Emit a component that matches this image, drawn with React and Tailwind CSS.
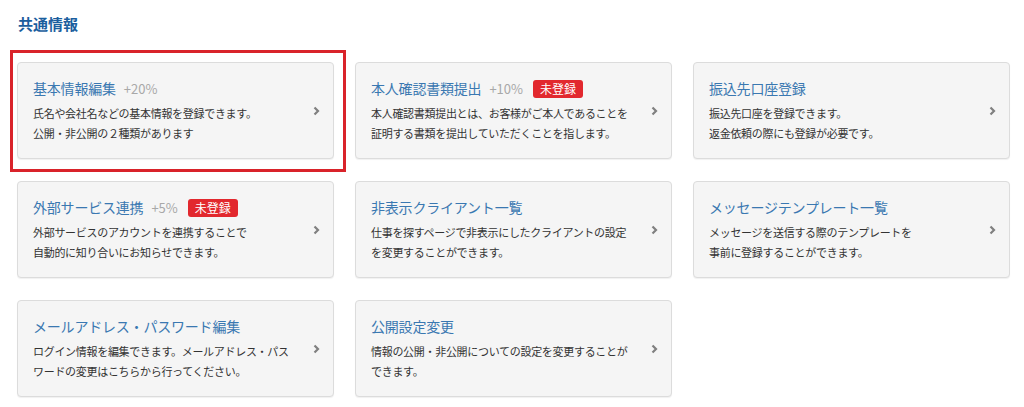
import React from 'react';

const items = [
  {
    title: '基本情報編集',
    rate: '+20%',
    lines: ['氏名や会社名などの基本情報を登録できます。', '公開・非公開の２種類があります'],
  },
  {
    title: '本人確認書類提出',
    rate: '+10%',
    badge: true,
    lines: ['本人確認書類提出とは、お客様がご本人であることを', '証明する書類を提出していただくことを指します。'],
  },
  {
    title: '振込先口座登録',
    lines: ['振込先口座を登録できます。', '返金依頼の際にも登録が必要です。'],
  },
  {
    title: '外部サービス連携',
    rate: '+5%',
    badge: true,
    lines: ['外部サービスのアカウントを連携することで', '自動的に知り合いにお知らせできます。'],
  },
  {
    title: '非表示クライアント一覧',
    lines: ['仕事を探すページで非表示にしたクライアントの設定', 'を変更することができます。'],
  },
  {
    title: 'メッセージテンプレート一覧',
    lines: ['メッセージを送信する際のテンプレートを', '事前に登録することができます。'],
  },
  {
    title: 'メールアドレス・パスワード編集',
    lines: ['ログイン情報を編集できます。メールアドレス・パス', 'ワードの変更はこちらから行ってください。'],
  },
  {
    title: '公開設定変更',
    lines: ['情報の公開・非公開についての設定を変更することが', 'できます。'],
  },
];

const Chevron = () => (
  <svg width="7" height="10" viewBox="0 0 7 10" className="shrink-0">
    <polyline points="1.5,1.5 5,5 1.5,8.5" fill="none" stroke="#808080" strokeWidth="2.2" />
  </svg>
);

const Card = ({ item }) => (
  <div className="w-[317px] h-[97px] flex items-center rounded-[4px] border border-[#dcdcdc] bg-[#f5f5f5] pl-[15px] pr-[13px] shadow-[0_1px_1px_rgba(0,0,0,0.06)]">
    <div className="flex-1 flex flex-col">
      <div className="flex items-center h-[20px]">
        <span className="text-[14px] text-[#3a78b1] tracking-[-0.2px]">{item.title}</span>
        {item.rate && <span className="ml-[8px] text-[13px] text-[#a8a8a8]">{item.rate}</span>}
        {item.badge && (
          <span className="ml-[10px] h-[18px] px-[7px] flex items-center rounded-[3px] bg-[#e2282e] text-white text-[12px]">
            未登録
          </span>
        )}
      </div>
      <div className="mt-[4px] text-[11px] leading-[20px] text-[#333] tracking-[-0.3px] whitespace-nowrap">
        {item.lines.map((l, i) => (
          <div key={i}>{l}</div>
        ))}
      </div>
    </div>
    <Chevron />
  </div>
);

export default function App() {
  return (
    <div
      className="relative w-[1024px] h-[407px] bg-white overflow-hidden"
      style={{ fontFamily: '"Noto Sans CJK JP", "Noto Sans", sans-serif' }}
    >
      <div className="pt-[13px] pl-[18px] text-[15px] font-bold text-[#1b5e9e] leading-[22px]">共通情報</div>
      <div className="mt-[27px] ml-[17px] grid grid-cols-[317px_317px_317px] gap-x-[21px] gap-y-[22px]">
        {items.map((it, i) => (
          <Card key={i} item={it} />
        ))}
      </div>
      <div className="absolute left-[10px] top-[50px] w-[336px] h-[122px] border-[3px] border-[#d9232a]" />
    </div>
  );
}
